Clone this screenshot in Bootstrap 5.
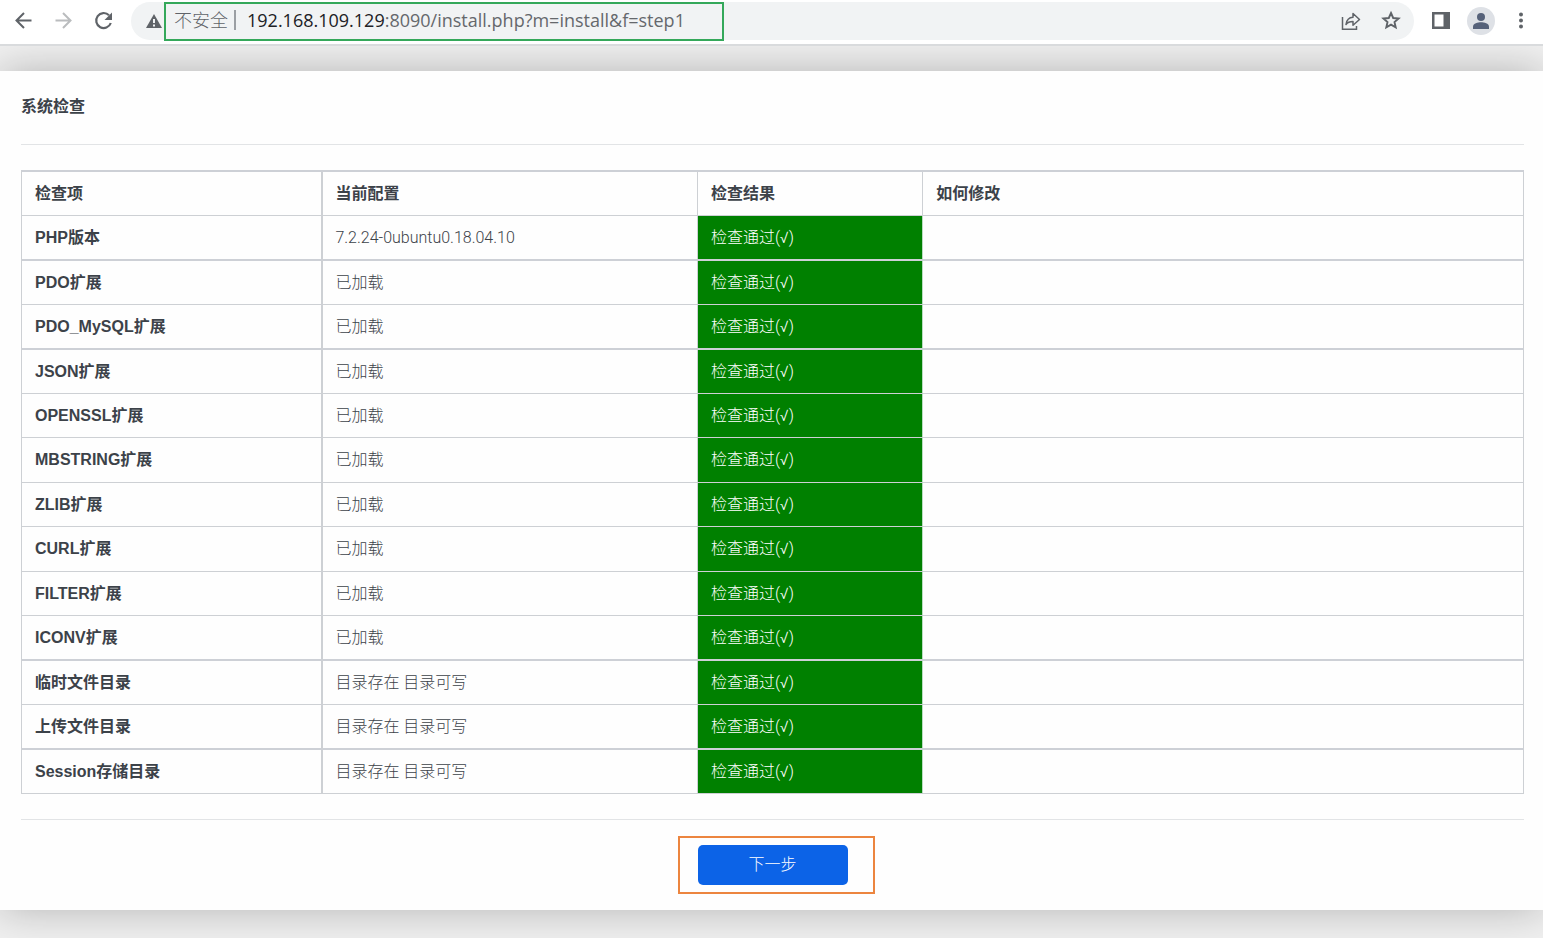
<!DOCTYPE html>
<html lang="zh-CN">
<head>
<meta charset="utf-8">
<meta name="viewport" content="width=device-width, initial-scale=1">
<title>系统检查</title>
<link href="https://cdn.jsdelivr.net/npm/bootstrap@5.3.0/dist/css/bootstrap.min.css" rel="stylesheet">
<style>
  body { background: #f0f0f0; color: #3c4249; font: 400 16px/24px "Liberation Sans", "Noto Sans CJK SC", sans-serif; }
  .browser-bar { z-index: 1; height: 46px; padding: 2px 10px 4px 11px; border-bottom: 2px solid #d9dbdd; }
  .tool-btn { width: 24px; height: 24px; padding: 0; border: 0; background: none; color: #5f6368; display: inline-flex; align-items: center; justify-content: center; }
  .tool-btn:disabled { color: #babcbe; }
  .address { height: 38px; margin: 0 15px 0 16px; padding: 0 11px 0 15px; border-radius: 19px; background: #f1f3f4; color: #5f6368; font-family: "Open Sans", "Noto Sans CJK SC", sans-serif; font-size: 18px; }
  .address-field { width: 560px; height: 39px; margin-left: 2px; padding: 0 0 2px 8px; border: 2px solid #34a85a; }
  .address-field span { font-weight: 300; }
  .address-field a { color: #65686c; font-size: 18px; }
  .address-field b { color: #202124; font-weight: 400; }
  .divider { width: 2px; height: 20px; margin: 0 11px 0 6px; background: #9b9fa3; }
  .window-tools { gap: 14px; }
  .avatar { width: 28px; height: 28px; border-radius: 50%; background: #dee1e6; }
  .install-panel { margin: 25px 0 28px; padding: 24px 19px 25px 21px; background: #fefefe; box-shadow: 0 0 40px rgba(0, 0, 0, .25); }
  .install-panel h1 { margin: 0; font-size: 16px; line-height: 24px; font-weight: 700; }
  .rule { margin: 25px 0; border: 0; border-top: 1px solid #e2e4e6; opacity: 1; }
  .checks { table-layout: fixed; border-collapse: separate; border-spacing: 0; border-top: 2px solid #cdd0d6; border-left: 1px solid #cdd0d4; }
  .checks th, .checks td { height: 44px; padding: 0 12px 0 13px; border: 0 solid #cdd0d4; border-width: 0 1px 1px 0; vertical-align: middle; }
  .checks tbody tr:nth-child(odd):nth-child(-n+3) > *,
  .checks tbody tr:nth-child(even):nth-child(n+6) > * { height: 45px; }
  .checks tr > :nth-child(2) { border-left-width: 1px; padding-left: 12px; }
  .checks .heavy > * { border-bottom: 2px solid #cdd0d6; }
  .checks td { font-family: Roboto, "Noto Sans CJK SC", sans-serif; font-weight: 300; }
  .checks .pass { background: #008000; color: #fff; border-right-color: #b9dcbf; }
  .next-step { position: relative; width: 150px; }
  .next-step .btn { height: 40px; padding: 0; border: 0; border-radius: 5px; background: #0c63e7; font-size: 16px; font-weight: 300; }
  .next-frame { position: absolute; inset: -9px -27px -9px -20px; border: 2px solid #ec853f; pointer-events: none; }
</style>
</head>
<body>
<header class="browser-bar position-relative d-flex align-items-center bg-white">
  <nav class="d-flex gap-3" aria-label="浏览器">
    <button class="tool-btn" type="button" aria-label="后退"><svg width="24" height="24" viewBox="0 0 24 24" fill="none" stroke="currentColor" stroke-width="2"><path d="M20.500 11.500H5.500M13 4 5.500 11.500l7.500 7.500"/></svg></button>
    <button class="tool-btn" type="button" disabled aria-label="前进"><svg width="24" height="24" viewBox="0 0 24 24" fill="none" stroke="currentColor" stroke-width="2"><path d="M4.500 11.500h15M12 4l7.500 7.500L12 19"/></svg></button>
    <button class="tool-btn" type="button" aria-label="刷新"><svg width="24" height="24" viewBox="0 0 24 24"><path fill="none" stroke="currentColor" stroke-width="2.200" d="M19.800 14A7.500 7.500 0 1 1 18 6.200"/><path fill="currentColor" d="M21 3.500V11h-7.500z"/></svg></button>
  </nav>
  <div class="address d-flex align-items-center flex-grow-1">
    <svg width="16" height="16" viewBox="0 0 16 16"><path fill="#5f6368" d="M8 1 16 15H0z"/><path fill="#f1f3f4" d="M7 6h2v4H7zM7 11.500h2v2H7z"/></svg>
    <div class="address-field d-flex align-items-center flex-shrink-0">
      <span>不安全</span><span class="divider"></span>
      <a class="text-decoration-none" href="#"><b>192.168.109.129</b>:8090/install.php?m=install&amp;f=step1</a>
    </div>
    <div class="d-flex gap-3 ms-auto">
      <button class="tool-btn" type="button" aria-label="分享"><svg width="24" height="24" viewBox="0 0 24 24" fill="none" stroke="currentColor" stroke-width="1.500"><path d="M3.500 8v12.200H17.500V17"/><path stroke-linejoin="round" d="M7 15.500c.6-4.500 3-7 7-7.200V4.500l6.500 6-6.500 5.800v-3.700c-3.400 0-5.500.8-7 2.900z"/></svg></button>
      <button class="tool-btn" type="button" aria-label="收藏"><svg width="24" height="24" viewBox="0 0 24 24" fill="none" stroke="currentColor" stroke-width="1.900"><path d="m12 4 2.200 5 5.400.5-4.100 3.600 1.200 5.300-4.700-2.800-4.700 2.800 1.200-5.300-4.100-3.600 5.400-.5z"/></svg></button>
    </div>
  </div>
  <div class="window-tools d-flex align-items-center">
    <button class="tool-btn" type="button" aria-label="侧边栏"><svg width="24" height="24" viewBox="0 0 24 24"><path fill="#5f6368" d="M3 3h18v17H3z"/><path fill="#fff" d="M5.500 5.500h9v12h-9z"/></svg></button>
    <button class="tool-btn avatar" type="button" aria-label="个人资料"><svg width="18" height="18" viewBox="0 0 18 18" fill="#56627a"><circle cx="9" cy="5" r="4"/><path d="M1 17v-2.500c0-3 5-4.200 8-4.200s8 1.200 8 4.200V17z"/></svg></button>
    <button class="tool-btn" type="button" aria-label="菜单"><svg width="24" height="24" viewBox="0 0 24 24" fill="currentColor"><circle cx="12" cy="5.500" r="2"/><circle cx="12" cy="11.500" r="2"/><circle cx="12" cy="17.500" r="2"/></svg></button>
  </div>
</header>
<main class="install-panel">
  <h1>系统检查</h1>
  <hr class="rule">
  <table class="checks w-100">
    <colgroup><col style="width:20%"><col style="width:25%"><col style="width:15%"><col style="width:40%"></colgroup>
    <thead><tr><th scope="col">检查项</th><th scope="col">当前配置</th><th scope="col">检查结果</th><th scope="col">如何修改</th></tr></thead>
    <tbody>
      <tr class="heavy"><th scope="row">PHP版本</th><td>7.2.24-0ubuntu0.18.04.10</td><td class="pass">检查通过(√)</td><td></td></tr>
      <tr><th scope="row">PDO扩展</th><td>已加载</td><td class="pass">检查通过(√)</td><td></td></tr>
      <tr class="heavy"><th scope="row">PDO_MySQL扩展</th><td>已加载</td><td class="pass">检查通过(√)</td><td></td></tr>
      <tr><th scope="row">JSON扩展</th><td>已加载</td><td class="pass">检查通过(√)</td><td></td></tr>
      <tr><th scope="row">OPENSSL扩展</th><td>已加载</td><td class="pass">检查通过(√)</td><td></td></tr>
      <tr><th scope="row">MBSTRING扩展</th><td>已加载</td><td class="pass">检查通过(√)</td><td></td></tr>
      <tr><th scope="row">ZLIB扩展</th><td>已加载</td><td class="pass">检查通过(√)</td><td></td></tr>
      <tr><th scope="row">CURL扩展</th><td>已加载</td><td class="pass">检查通过(√)</td><td></td></tr>
      <tr><th scope="row">FILTER扩展</th><td>已加载</td><td class="pass">检查通过(√)</td><td></td></tr>
      <tr class="heavy"><th scope="row">ICONV扩展</th><td>已加载</td><td class="pass">检查通过(√)</td><td></td></tr>
      <tr><th scope="row">临时文件目录</th><td>目录存在 目录可写</td><td class="pass">检查通过(√)</td><td></td></tr>
      <tr class="heavy"><th scope="row">上传文件目录</th><td>目录存在 目录可写</td><td class="pass">检查通过(√)</td><td></td></tr>
      <tr><th scope="row">Session存储目录</th><td>目录存在 目录可写</td><td class="pass">检查通过(√)</td><td></td></tr>
    </tbody>
  </table>
  <hr class="rule">
  <div class="next-step mx-auto">
    <button class="btn btn-primary w-100" type="button">下一步</button>
    <span class="next-frame"></span>
  </div>
</main>
<script src="https://cdn.jsdelivr.net/npm/bootstrap@5.3.0/dist/js/bootstrap.bundle.min.js"></script>
</body>
</html>
